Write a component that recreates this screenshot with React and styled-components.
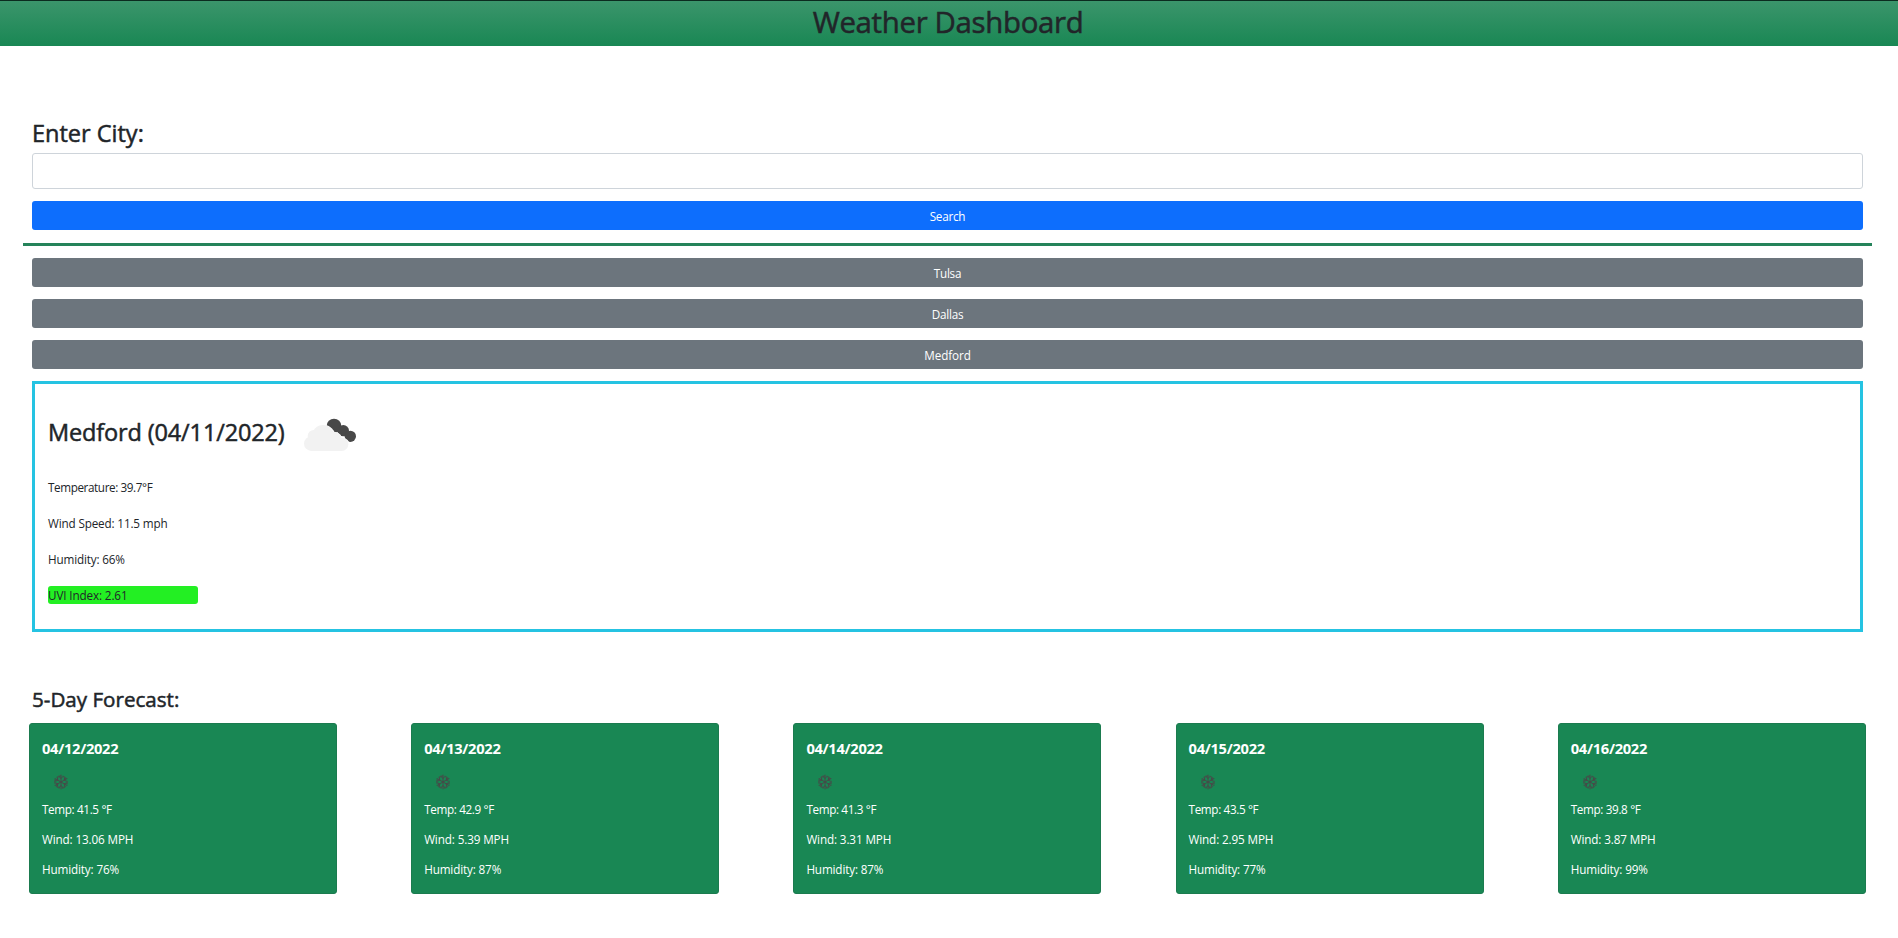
import React from "react";
import styled, { createGlobalStyle } from "styled-components";

const GlobalStyle = createGlobalStyle`
  *, *::before, *::after { box-sizing: border-box; }
  body {
    margin: 0;
    background: #fff;
    color: #212529;
    font: 400 11.7px/18px "Segoe UI", "Open Sans", "Noto Sans", sans-serif;
  }
  h1, h2, h3, h4, p { margin: 0; }
  h1, h2, h3 { -webkit-text-stroke: 0.5px currentColor; }
`;

const Header = styled.header`
  height: 46px;
  padding-top: 3px;
  border-top: 1px solid #0b2b1f;
  background: linear-gradient(#3b956b, #198754);
  text-align: center;
`;

const PageTitle = styled.h1`
  padding-right: 2px;
  font-size: 29.4px;
  font-weight: 500;
  line-height: 36px;
  letter-spacing: -0.33px;
`;

const Main = styled.main`
  display: flex;
  flex-direction: column;
  padding: 73px 35px 0 32px;
`;

const SearchForm = styled.form`
  display: flex;
  flex-direction: column;
`;

const Label = styled.h2`
  margin-bottom: 5px;
  font-size: 23.5px;
  font-weight: 500;
  line-height: 29px;
`;

const CityInput = styled.input`
  height: 36px;
  margin-bottom: 12px;
  padding: 4px 9px;
  border: 1px solid #ced4da;
  border-radius: 3px;
  background: #fff;
  font: inherit;
  outline: none;
`;

const Button = styled.button`
  height: 29px;
  padding: 1px 0 0;
  border: 0;
  border-radius: 3px;
  background: ${(p) => (p.$primary ? "#0d6efd" : "#6c757d")};
  color: #fff;
  font: inherit;
  letter-spacing: ${(p) => p.$track}px;
`;

const Divider = styled.hr`
  height: 3px;
  margin: 13px -9px 12px;
  border: 0;
  background: #25835a;
`;

const History = styled.div`
  display: flex;
  flex-direction: column;
  gap: 12px;
  margin-bottom: 12px;
`;

const Current = styled.section`
  display: flex;
  flex-direction: column;
  height: 251px;
  padding: 0 13px;
  border: 3px solid #25c3e2;
`;

const CurrentHeading = styled.div`
  display: flex;
  align-items: center;
  height: 94px;
`;

const CurrentTitle = styled.h2`
  width: 248px;
  padding-top: 2px;
  font-size: 23.5px;
  font-weight: 500;
  line-height: 29px;
  letter-spacing: -0.14px;
  white-space: nowrap;
`;

const CloudSvg = styled.svg`
  flex: none;
  width: 64px;
  height: 44px;
  margin-top: 6px;
`;

const Readings = styled.div`
  display: flex;
  flex-direction: column;
  gap: 18px;
`;

const Reading = styled.p`
  letter-spacing: ${(p) => p.$track}px;
`;

const UviReading = styled(Reading)`
  width: 150px;
  border-radius: 3px;
  background: #23ef23;
`;

const ForecastTitle = styled.h3`
  margin: 55px 0 11px;
  font-size: 20.6px;
  font-weight: 500;
  line-height: 25px;
`;

const Forecast = styled.section`
  display: flex;
  justify-content: space-between;
  margin: 0 -2.8px 0 -3px;
`;

const DayCard = styled.article`
  width: 308px;
  height: 171px;
  padding: 15px 12px;
  border: 1px solid #1b7b4f;
  border-radius: 3px;
  background: #198754;
  color: #fff;
`;

const DayDate = styled.h4`
  font-size: 14.7px;
  font-weight: 700;
  line-height: 18px;
  letter-spacing: -0.3px;
`;

const DayIcon = styled.div`
  display: flex;
  height: 43px;
  padding: 17px 0 0 11px;
`;

const DayStats = styled.div`
  display: flex;
  flex-direction: column;
  gap: 12px;
`;

function BrokenClouds() {
  return (
    <CloudSvg viewBox="0 0 192 132">
      <g fill="#484848">
        <circle cx="114" cy="42" r="22" />
        <circle cx="142" cy="56" r="17" />
        <circle cx="163" cy="73" r="17" />
      </g>
      <g fill="#fff">
        <circle cx="83" cy="74" r="35" />
        <circle cx="116" cy="84" r="23" />
        <circle cx="140" cy="99" r="21" />
      </g>
      <g fill="#f2f2f2">
        <circle cx="81" cy="72" r="33" />
        <circle cx="53" cy="72" r="18" />
        <circle cx="46" cy="95" r="22" />
        <circle cx="114" cy="82" r="23" />
        <circle cx="137" cy="97" r="20" />
        <rect x="44" y="82" width="94" height="35" />
      </g>
    </CloudSvg>
  );
}

function Snow() {
  return (
    <svg width="16" height="16" viewBox="-8 -8 16 16" fill="none" stroke="#484848">
      <circle r="6.1" strokeWidth="1.5" strokeDasharray="4.4 1.99" strokeDashoffset="2.2" opacity=".75" />
      {[0, 60, 120].map((angle) => (
        <path key={angle} d="M0-7.3V7.3M-1.8-5.2L0-3.6L1.8-5.2M-1.8 5.2L0 3.6L1.8 5.2" strokeWidth="1" transform={`rotate(${angle})`} />
      ))}
    </svg>
  );
}

const cities = [
  { name: "Tulsa", track: -0.25 },
  { name: "Dallas", track: -0.25 },
  { name: "Medford", track: -0.1 },
];

const days = [
  { date: "04/12/2022", temp: "41.5", wind: "13.06", humidity: 76 },
  { date: "04/13/2022", temp: "42.9", wind: "5.39", humidity: 87 },
  { date: "04/14/2022", temp: "41.3", wind: "3.31", humidity: 87 },
  { date: "04/15/2022", temp: "43.5", wind: "2.95", humidity: 77 },
  { date: "04/16/2022", temp: "39.8", wind: "3.87", humidity: 99 },
];

export default function App() {
  return (
    <>
      <GlobalStyle />
      <Header>
        <PageTitle>Weather Dashboard</PageTitle>
      </Header>
      <Main>
        <SearchForm onSubmit={(e) => e.preventDefault()}>
          <Label>Enter City:</Label>
          <CityInput aria-label="City" />
          <Button $primary $track={-0.23}>Search</Button>
        </SearchForm>
        <Divider />
        <History>
          {cities.map((c) => (
            <Button key={c.name} $track={c.track}>{c.name}</Button>
          ))}
        </History>
        <Current>
          <CurrentHeading>
            <CurrentTitle>Medford (04/11/2022)</CurrentTitle>
            <BrokenClouds />
          </CurrentHeading>
          <Readings>
            <Reading $track={-0.39}>Temperature: 39.7°F</Reading>
            <Reading $track={-0.14}>Wind Speed: 11.5 mph</Reading>
            <Reading $track={-0.15}>Humidity: 66%</Reading>
            <UviReading $track={-0.12}>UVI Index: 2.61</UviReading>
          </Readings>
        </Current>
        <ForecastTitle>5-Day Forecast:</ForecastTitle>
        <Forecast>
          {days.map((d) => (
            <DayCard key={d.date}>
              <DayDate>{d.date}</DayDate>
              <DayIcon><Snow /></DayIcon>
              <DayStats>
                <Reading $track={-0.35}>Temp: {d.temp} °F</Reading>
                <Reading $track={-0.12}>Wind: {d.wind} MPH</Reading>
                <Reading $track={-0.14}>Humidity: {d.humidity}%</Reading>
              </DayStats>
            </DayCard>
          ))}
        </Forecast>
      </Main>
    </>
  );
}
